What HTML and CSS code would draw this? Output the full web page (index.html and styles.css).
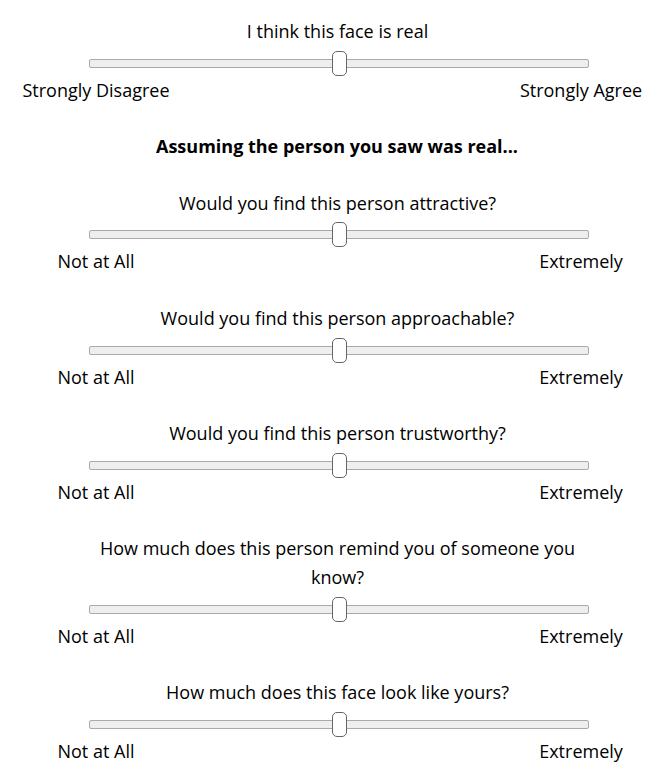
FILE: index.html
```html
<!DOCTYPE html>
<html lang="en">
<head>
<meta charset="utf-8">
<title>Face rating</title>
<link rel="stylesheet" href="styles.css">
</head>
<body>
<main class="page">
  <section class="item">
    <p class="question">I think this face is real</p>
    <div class="slider-row"><input class="slider" type="range" min="0" max="100" value="50"></div>
    <div class="labels"><span class="label"><span>Strongly Disagree</span></span><span class="label"><span>Strongly Agree</span></span></div>
  </section>
  <h2 class="heading">Assuming the person you saw was real...</h2>
  <section class="item">
    <p class="question">Would you find this person attractive?</p>
    <div class="slider-row"><input class="slider" type="range" min="0" max="100" value="50"></div>
    <div class="labels"><span class="label"><span>Not at All</span></span><span class="label"><span>Extremely</span></span></div>
  </section>
  <section class="item">
    <p class="question">Would you find this person approachable?</p>
    <div class="slider-row"><input class="slider" type="range" min="0" max="100" value="50"></div>
    <div class="labels"><span class="label"><span>Not at All</span></span><span class="label"><span>Extremely</span></span></div>
  </section>
  <section class="item">
    <p class="question">Would you find this person trustworthy?</p>
    <div class="slider-row"><input class="slider" type="range" min="0" max="100" value="50"></div>
    <div class="labels"><span class="label"><span>Not at All</span></span><span class="label"><span>Extremely</span></span></div>
  </section>
  <section class="item">
    <p class="question">How much does this person remind you of someone you know?</p>
    <div class="slider-row"><input class="slider" type="range" min="0" max="100" value="50"></div>
    <div class="labels"><span class="label"><span>Not at All</span></span><span class="label"><span>Extremely</span></span></div>
  </section>
  <section class="item">
    <p class="question">How much does this face look like yours?</p>
    <div class="slider-row"><input class="slider" type="range" min="0" max="100" value="50"></div>
    <div class="labels"><span class="label"><span>Not at All</span></span><span class="label"><span>Extremely</span></span></div>
  </section>
</main>
</body>
</html>
```
FILE: styles.css
```css
html, body {
  margin: 0;
  padding: 0;
  background: #fff;
}
body {
  font-family: "Open Sans", Arial, sans-serif;
  font-size: 18px;
  line-height: 28.8px;
  color: #000;
}
.page {
  width: 500px;
  margin: 0 auto;
  padding: 17px 0 0 12px;
  display: flex;
  flex-direction: column;
  gap: 27.6px;
}
.item {
  display: flex;
  flex-direction: column;
}
.question {
  margin: 0;
  padding-right: 3px;
  text-align: center;
}
.heading {
  margin: 0;
  padding-right: 4px;
  font-size: 18px;
  font-weight: 700;
  line-height: 28.8px;
  text-align: center;
}
.slider-row {
  padding-top: 5px;
  height: 25px;
}
.slider {
  -webkit-appearance: none;
  appearance: none;
  display: block;
  width: 500px;
  height: 25px;
  margin: 0;
  padding: 0;
  background: transparent;
}
.slider::-webkit-slider-runnable-track {
  box-sizing: border-box;
  height: 9px;
  background: #eee;
  border: 1px solid #aaa;
  border-radius: 2px;
}
.slider::-webkit-slider-thumb {
  -webkit-appearance: none;
  box-sizing: border-box;
  width: 15px;
  height: 25px;
  margin-top: -9px;
  border: 1px solid #666;
  border-radius: 5px;
  background: #fff;
}
.labels {
  display: flex;
  justify-content: space-between;
  padding: 0 8px 0 7px;
}
.label {
  width: 0;
  display: flex;
  justify-content: center;
  white-space: nowrap;
}
```
